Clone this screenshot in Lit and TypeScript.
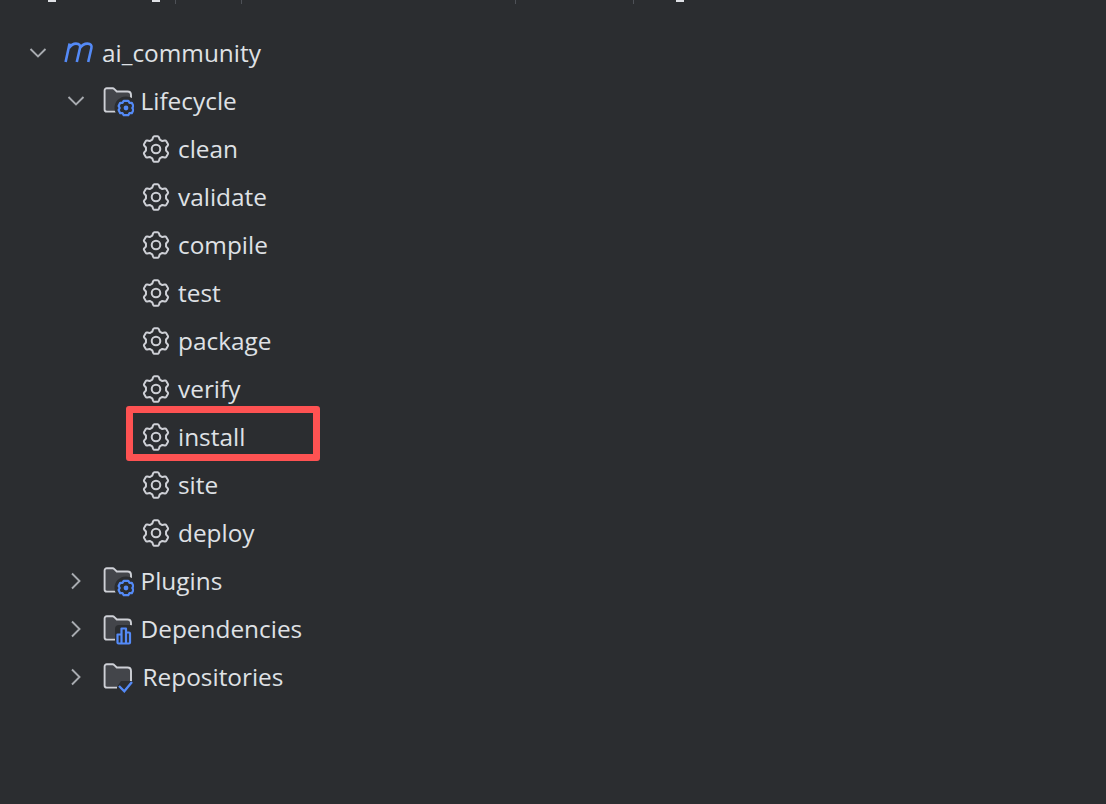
import { LitElement, html, css, svg } from 'lit';
import { customElement } from 'lit/decorators.js';

type Badge = 'gear' | 'bars' | 'check';

const GOAL_PATH =
  'M10 1.6 L12.4 1.6 C13 1.6 13.2 2 13.4 2.5 L14 4.2 L15.9 5.3 L17.7 4.9 C18.2 4.8 18.6 4.9 18.9 5.4 L20.1 7.5 C20.4 8 20.3 8.4 19.9 8.8 L18.7 10.1 L18.7 12.3 L19.9 13.6 C20.3 14 20.4 14.4 20.1 14.9 L18.9 17 C18.6 17.5 18.2 17.6 17.7 17.5 L15.9 17.1 L14 18.2 L13.4 19.9 C13.2 20.4 13 20.8 12.4 20.8 L10 20.8 C9.4 20.8 9.2 20.4 9 19.9 L8.4 18.2 L6.5 17.1 L4.7 17.5 C4.2 17.6 3.8 17.5 3.5 17 L2.3 14.9 C2 14.4 2.1 14 2.5 13.6 L3.7 12.3 L3.7 10.1 L2.5 8.8 C2.1 8.4 2 8 2.3 7.5 L3.5 5.4 C3.8 4.9 4.2 4.8 4.7 4.9 L6.5 5.3 L8.4 4.2 L9 2.5 C9.2 2 9.4 1.6 10 1.6 Z';

const goals = ['clean', 'validate', 'compile', 'test', 'package', 'verify', 'install', 'site', 'deploy'];

// cut-off toolbar above the tree: [gap before, width, kind]
const stripBits: [number, number, string][] = [
  [48, 8, 'ink'],
  [96, 8, 'ink'],
  [15, 1, 'sep'],
  [65, 1, 'sep'],
  [273, 1, 'sep'],
  [117, 1, 'sep'],
  [42, 8, 'ink'],
];

const chevron = (open: boolean) => html`
  <svg class="chevron" width="20" height="20" viewBox="0 0 20 20" fill="none">
    <path d=${open ? 'M2.5 6 L10 13.5 L17.5 6' : 'M6 2.5 L13.5 10 L6 17.5'} stroke="#a8abb0" stroke-width="1.9" />
  </svg>
`;

const mavenIcon = html`
  <svg class="maven" width="32" height="24" viewBox="0 0 32 24" fill="none">
    <path
      d="M1.6 21 L5.6 2.4 M5 7 C7 4 9.6 2.6 12 2.6 C15.4 2.6 16.6 4.4 16 7 L12.8 21 M16 7 C18 4 20.8 2.6 23.4 2.6 C26.8 2.6 28 4.4 27.4 7 L24.2 21"
      stroke="#548af7"
      stroke-width="2.6"
    />
  </svg>
`;

const folder = (badge: Badge) => html`
  <svg class="folder" width="32" height="32" viewBox="0 0 32 32" fill="none">
    <path
      d="M2.6 5.5 C2.6 4.2 3.5 3.3 4.8 3.3 L10.6 3.3 C11.5 3.3 12 3.7 12.6 4.3 L14.8 6.5 L25.5 6.5 C27.6 6.5 29 7.9 29 10 L29 23.5 C29 25.4 27.6 26.6 25.8 26.6 L4.8 26.6 C3.5 26.6 2.6 25.7 2.6 24.4 Z"
      fill="#43454a"
      stroke="#ced0d6"
      stroke-width="1.9"
    />
    ${badge === 'gear'
      ? svg`
          <circle cx="24" cy="23" r="11.5" fill="#2b2d30" />
          <path d="M21.7 15.8 L26.3 15.8 L27.4 17.8 L29.8 17.8 L31.4 21 L30.3 23 L31.4 25 L29.8 28.2 L27.4 28.2 L26.3 30.2 L21.7 30.2 L20.6 28.2 L18.2 28.2 L16.6 25 L17.7 23 L16.6 21 L18.2 17.8 L20.6 17.8 Z" fill="none" stroke="#548af7" stroke-width="2.2" stroke-linejoin="round" />
          <circle cx="24" cy="23" r="2.4" fill="#548af7" />
        `
      : badge === 'bars'
        ? svg`
            <rect x="13" y="12" width="19" height="20" rx="4" fill="#2b2d30" />
            <path d="M15.5 21.5 H19.5 V30.5 H16.5 Q15.5 30.5 15.5 29.5 Z M19.5 15.5 H24 V30.5 H19.5 Z M24 19.5 H27 Q28 19.5 28 20.5 V29.5 Q28 30.5 27 30.5 H24 Z" fill="#2b2d30" stroke="#548af7" stroke-width="2.2" stroke-linejoin="round" />
          `
        : svg`
            <path d="M15 32 V26 L19 20 H32 V32 Z" fill="#2b2d30" />
            <path d="M17 25 L22.3 30.3 L30 21" fill="none" stroke="#548af7" stroke-width="2.3" />
          `}
  </svg>
`;

const gear = html`
  <svg class="gear" width="30" height="30" viewBox="0 0 22.4 22.4" fill="none">
    <path d=${GOAL_PATH} stroke="#ced0d6" stroke-width="1.5" stroke-linejoin="round" />
    <circle cx="11.2" cy="11.2" r="3.2" stroke="#ced0d6" stroke-width="1.5" />
  </svg>
`;

@customElement('app-root')
export class AppRoot extends LitElement {
  static styles = css`
    :host {
      display: block;
      width: 1106px;
      height: 804px;
      overflow: hidden;
      position: relative;
      background: #2b2d30;
      color: #dfe1e5;
      font-family: 'Open Sans', 'Noto Sans', sans-serif;
      font-size: 24.4px;
    }
    .top-strip {
      display: flex;
      height: 4px;
      overflow: hidden;
    }
    .top-strip .ink {
      height: 2px;
      background: #dfe1e5;
    }
    .top-strip .sep {
      height: 4px;
      background: #4e5157;
    }
    .tree {
      display: flex;
      flex-direction: column;
      padding-top: 25px;
    }
    .row {
      display: flex;
      align-items: center;
      height: 48px;
      white-space: nowrap;
    }
    .row span {
      padding-bottom: 2px;
    }
    .row.root {
      padding-left: 28px;
    }
    .row.group {
      padding-left: 66px;
    }
    .row.goal {
      padding-left: 141px;
    }
    .chevron {
      flex: none;
    }
    .maven {
      flex: none;
      margin-left: 16px;
      margin-right: 6px;
    }
    .folder {
      flex: none;
      margin-left: 16px;
      margin-right: 6.5px;
    }
    .gear {
      flex: none;
      margin-right: 7px;
    }
    .label-shift {
      margin-left: 2px;
    }
    .highlight {
      position: absolute;
      left: 126px;
      top: 406px;
      width: 194px;
      height: 55px;
      box-sizing: border-box;
      border: 7px solid #fe5252;
      border-radius: 3px;
    }
  `;

  render() {
    return html`
      <div class="top-strip">
        ${stripBits.map(
          ([gap, width, kind]) => html`<i class=${kind} style="margin-left:${gap}px;width:${width}px"></i>`,
        )}
      </div>
      <div class="tree">
        <div class="row root">${chevron(true)}${mavenIcon}<span>ai_community</span></div>
        <div class="row group">${chevron(true)}${folder('gear')}<span>Lifecycle</span></div>
        ${goals.map((g) => html`<div class="row goal">${gear}<span>${g}</span></div>`)}
        <div class="row group">${chevron(false)}${folder('gear')}<span>Plugins</span></div>
        <div class="row group">${chevron(false)}${folder('bars')}<span>Dependencies</span></div>
        <div class="row group">${chevron(false)}${folder('check')}<span class="label-shift">Repositories</span></div>
      </div>
      <div class="highlight"></div>
    `;
  }
}
